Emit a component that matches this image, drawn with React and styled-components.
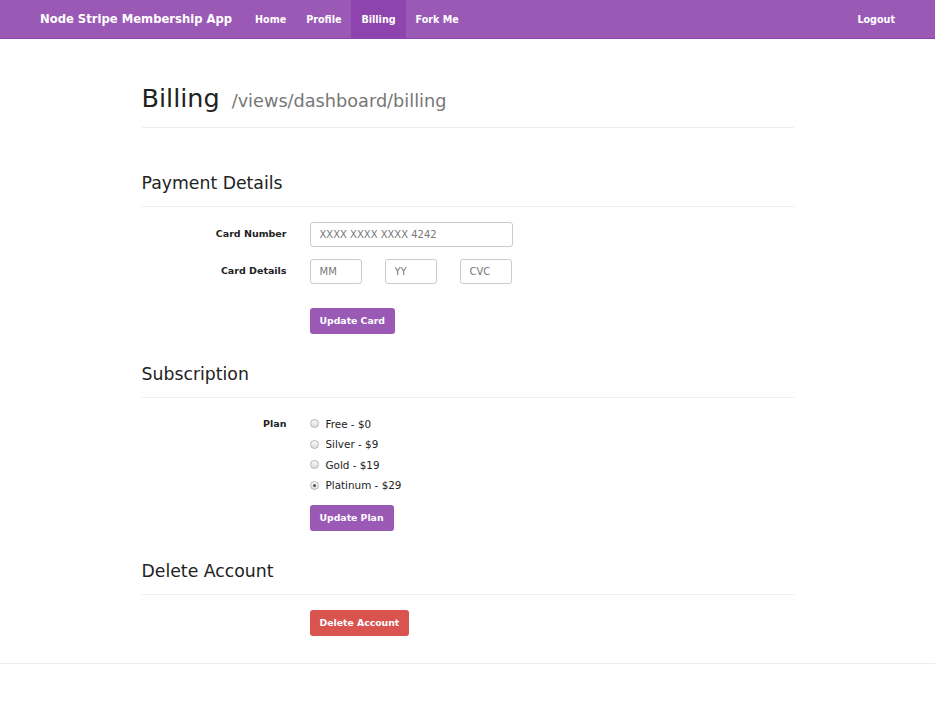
import React from 'react';
import styled, { createGlobalStyle } from 'styled-components';

const GlobalStyle = createGlobalStyle`
  body {
    margin: 0;
    background: #fff;
    font-family: "DejaVu Sans", "Liberation Sans", sans-serif;
    color: #333;
  }
`;

const Navbar = styled.nav`
  height: 38px;
  background-color: #9b59b6;
  border-bottom: 1px solid #8e44ad;
  display: flex;
  align-items: stretch;
  padding: 0 30px 0 40px;
`;

const Brand = styled.a`
  color: #fff;
  font-size: 11.6px;
  font-weight: bold;
  display: flex;
  align-items: center;
  margin-right: 13px;
`;

const NavItem = styled.a`
  color: #fff;
  font-size: 9.6px;
  font-weight: bold;
  display: flex;
  align-items: center;
  padding: 0 10px;
  background-color: ${(p) => (p.active ? '#8e44ad' : 'transparent')};
`;

const NavSpacer = styled.div`
  flex: 1;
`;

const Container = styled.main`
  width: 652px;
  margin: 0 auto;
`;

const PageHeader = styled.div`
  padding-top: 47px;
  padding-bottom: 15px;
  border-bottom: 1px solid #eee;
  display: flex;
  align-items: baseline;
`;

const Title = styled.h1`
  margin: 0;
  font-size: 25.5px;
  font-weight: normal;
  color: #222;
  line-height: 1;
`;

const SubTitle = styled.small`
  margin-left: 12px;
  font-size: 17.7px;
  color: #777;
`;

const SectionTitle = styled.h3`
  margin: ${(p) => p.top}px 0 0;
  font-size: 17.3px;
  font-weight: normal;
  line-height: 24px;
  color: #222;
  padding-bottom: 11px;
  border-bottom: 1px solid #eee;
`;

const Form = styled.div`
  padding-top: ${(p) => p.top || 15}px;
  display: flex;
  flex-direction: column;
`;

const FormRow = styled.div`
  display: grid;
  grid-template-columns: 145px 1fr;
  column-gap: 23px;
  margin-bottom: ${(p) => p.gap || 0}px;
`;

const Label = styled.label`
  font-size: 9.5px;
  font-weight: bold;
  color: #222;
  text-align: right;
  padding-top: ${(p) => p.top || 6}px;
`;

const Inputs = styled.div`
  display: flex;
  gap: 23px;
`;

const TextInput = styled.input`
  box-sizing: border-box;
  width: ${(p) => p.w}px;
  height: 25px;
  border: 1px solid #ccc;
  border-radius: 3px;
  padding: 0 9px;
  font-family: inherit;
  font-size: 10px;
  color: #555;
  &::placeholder {
    color: #777;
  }
`;

const Button = styled.button`
  height: 26px;
  border: none;
  border-radius: 3px;
  padding: 0 10px;
  font-family: inherit;
  font-size: 9.3px;
  font-weight: bold;
  color: #fff;
  background-color: ${(p) => (p.danger ? '#d9534f' : '#9b59b6')};
  cursor: pointer;
`;

const RadioList = styled.div`
  display: flex;
  flex-direction: column;
`;

const RadioLabel = styled.label`
  display: flex;
  align-items: center;
  height: 20.5px;
  font-size: 10.4px;
  color: #222;
`;

const Radio = styled.input`
  appearance: none;
  width: 9px;
  height: 9px;
  margin: 0 7px 0 0;
  border-radius: 50%;
  border: 1px solid #b5b5b5;
  background: linear-gradient(#fafafa, #ddd);
  position: relative;
  &:checked::after {
    content: '';
    position: absolute;
    left: 2px;
    top: 2px;
    width: 3px;
    height: 3px;
    border-radius: 50%;
    background: #555;
  }
`;

const Footer = styled.div`
  margin-top: 27px;
  border-top: 1px solid #eee;
  height: 38px;
`;

const plans = [
  { id: 'free', text: 'Free - $0' },
  { id: 'silver', text: 'Silver - $9' },
  { id: 'gold', text: 'Gold - $19' },
  { id: 'platinum', text: 'Platinum - $29' },
];

const App = () => (
  <>
    <GlobalStyle />
    <Navbar>
      <Brand>Node Stripe Membership App</Brand>
      <NavItem>Home</NavItem>
      <NavItem>Profile</NavItem>
      <NavItem active>Billing</NavItem>
      <NavItem>Fork Me</NavItem>
      <NavSpacer />
      <NavItem>Logout</NavItem>
    </Navbar>
    <Container>
      <PageHeader>
        <Title>Billing</Title>
        <SubTitle>/views/dashboard/billing</SubTitle>
      </PageHeader>

      <SectionTitle top={43}>Payment Details</SectionTitle>
      <Form>
        <FormRow gap={12}>
          <Label>Card Number</Label>
          <TextInput w={203} placeholder="XXXX XXXX XXXX 4242" />
        </FormRow>
        <FormRow gap={24}>
          <Label>Card Details</Label>
          <Inputs>
            <TextInput w={52} placeholder="MM" />
            <TextInput w={52} placeholder="YY" />
            <TextInput w={52} placeholder="CVC" />
          </Inputs>
        </FormRow>
        <FormRow>
          <span />
          <div>
            <Button>Update Card</Button>
          </div>
        </FormRow>
      </Form>

      <SectionTitle top={28}>Subscription</SectionTitle>
      <Form top={16}>
        <FormRow gap={9}>
          <Label top={4}>Plan</Label>
          <RadioList>
            {plans.map((p) => (
              <RadioLabel key={p.id}>
                <Radio type="radio" name="plan" defaultChecked={p.id === 'platinum'} />
                {p.text}
              </RadioLabel>
            ))}
          </RadioList>
        </FormRow>
        <FormRow>
          <span />
          <div>
            <Button>Update Plan</Button>
          </div>
        </FormRow>
      </Form>

      <SectionTitle top={28}>Delete Account</SectionTitle>
      <Form>
        <FormRow>
          <span />
          <div>
            <Button danger>Delete Account</Button>
          </div>
        </FormRow>
      </Form>
    </Container>
    <Footer />
  </>
);

export default App;
